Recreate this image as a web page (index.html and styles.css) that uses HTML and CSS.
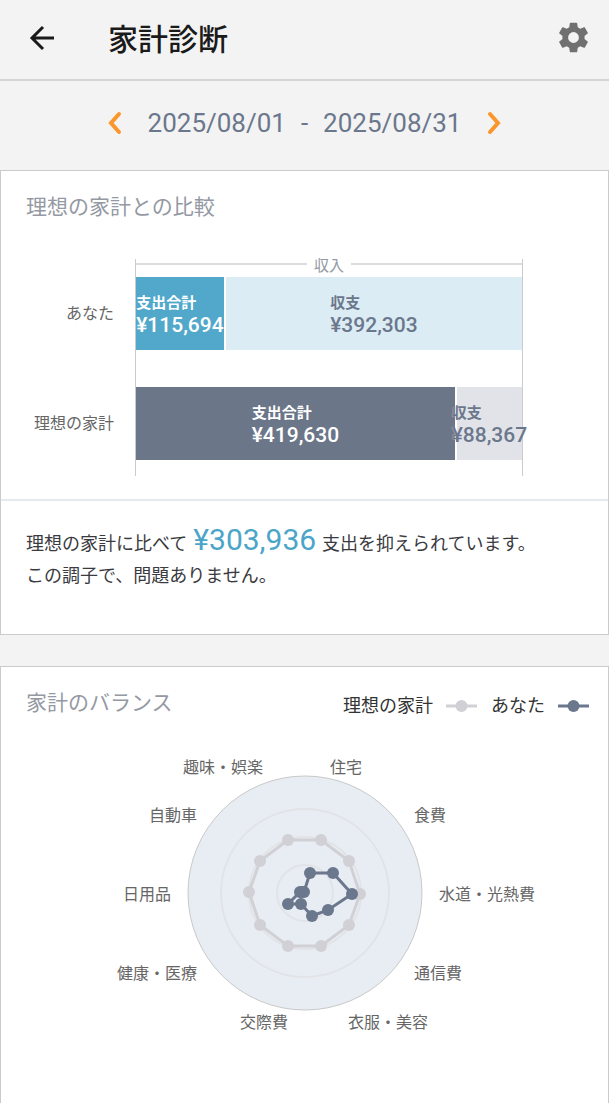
FILE: index.html
```html
<!DOCTYPE html>
<html lang="ja">

<head>
    <meta charset="UTF-8">
    <meta name="viewport" content="width=device-width, initial-scale=1.0">
    <title>家計診断</title>
    <link rel="stylesheet" href="styles.css">
</head>

<body>
    <div class="app">
        <header class="app-bar">
            <button class="icon-button" type="button" aria-label="戻る">
                <svg width="28" height="28" viewBox="0 0 28 28">
                    <path class="back-arrow" d="M26 14H4M15 3L4 14L15 25" />
                </svg>
            </button>
            <h1>家計診断</h1>
            <button class="icon-button" type="button" aria-label="設定">
                <svg width="37" height="37" viewBox="0 0 24 24">
                    <path class="gear" fill-rule="evenodd" d="M19.14,12.94c0.04-0.3,0.06-0.61,0.06-0.94c0-0.32-0.02-0.64-0.07-0.94l2.03-1.58c0.18-0.14,0.23-0.41,0.12-0.61l-1.92-3.32c-0.12-0.22-0.37-0.29-0.59-0.22l-2.39,0.96c-0.5-0.38-1.03-0.7-1.62-0.94L14.4,2.81c-0.04-0.24-0.24-0.41-0.48-0.41h-3.84c-0.24,0-0.43,0.17-0.47,0.41L9.25,5.35C8.66,5.59,8.12,5.92,7.63,6.29L5.24,5.33c-0.22-0.08-0.47,0-0.59,0.22L2.74,8.87C2.62,9.08,2.66,9.34,2.86,9.48l2.03,1.58C4.84,11.36,4.8,11.69,4.8,12s0.02,0.64,0.07,0.94l-2.03,1.58c-0.18,0.14-0.23,0.41-0.12,0.61l1.92,3.32c0.12,0.22,0.37,0.29,0.59,0.22l2.39-0.96c0.5,0.38,1.03,0.7,1.62,0.94l0.36,2.54c0.05,0.24,0.24,0.41,0.48,0.41h3.84c0.24,0,0.44-0.17,0.47-0.41l0.36-2.54c0.59-0.24,1.13-0.56,1.62-0.94l2.39,0.96c0.22,0.08,0.47,0,0.59-0.22l1.92-3.32c0.12-0.22,0.07-0.47-0.12-0.61L19.14,12.94zM12,15.5a3.5,3.5 0 1 1 0,-7a3.5,3.5 0 1 1 0,7z" />
                </svg>
            </button>
        </header>

        <nav class="period">
            <button class="icon-button" type="button" aria-label="前の期間">
                <svg width="16" height="24" viewBox="0 0 16 24">
                    <path class="chevron" d="M13 3L5 12L13 21" />
                </svg>
            </button>
            <div class="period-range">
                <span>2025/08/01</span>
                <span>-</span>
                <span>2025/08/31</span>
            </div>
            <button class="icon-button" type="button" aria-label="次の期間">
                <svg width="16" height="24" viewBox="0 0 16 24">
                    <path class="chevron" d="M3 3L11 12L3 21" />
                </svg>
            </button>
        </nav>

        <main>
            <section class="card">
                <h2>理想の家計との比較</h2>

                <div class="comparison">
                    <div class="bar-labels">
                        <div class="bar-label">あなた</div>
                        <div class="bar-label">理想の家計</div>
                    </div>
                    <div class="plot">
                        <div class="income">収入</div>
                        <div class="bar">
                            <div class="segment you-spent" style="width: 22.77%">
                                <div class="segment-text">支出合計<span class="amount">¥115,694</span></div>
                            </div>
                            <div class="segment you-left" style="width: 77.23%">
                                <div class="segment-text">収支<span class="amount">¥392,303</span></div>
                            </div>
                        </div>
                        <div class="bar">
                            <div class="segment ideal-spent" style="width: 82.6%">
                                <div class="segment-text">支出合計<span class="amount">¥419,630</span></div>
                            </div>
                            <div class="segment ideal-left" style="width: 17.4%">
                                <div class="segment-text">収支<span class="amount">¥88,367</span></div>
                            </div>
                        </div>
                    </div>
                </div>

                <p class="message">理想の家計に比べて<strong>¥303,936</strong>支出を抑えられています。<br>この調子で、問題ありません。</p>
            </section>

            <section class="card balance">
                <div class="card-head">
                    <h2>家計のバランス</h2>
                    <ul class="legend">
                        <li>理想の家計
                            <svg class="ideal" width="31" height="14" viewBox="0 0 31 14">
                                <path d="M0 7H31" />
                                <circle cx="15.5" cy="7" r="6" />
                            </svg>
                        </li>
                        <li>あなた
                            <svg class="you" width="31" height="14" viewBox="0 0 31 14">
                                <path d="M0 7H31" />
                                <circle cx="15.5" cy="7" r="6" />
                            </svg>
                        </li>
                    </ul>
                </div>

                <svg class="radar" viewBox="-240 -143 480 290" role="img" aria-label="家計のバランス">
                    <circle class="radar-area" r="117" />
                    <circle class="radar-ring" r="84" />
                    <circle class="radar-ring" r="56" />
                    <circle class="radar-ring" r="28" />

                    <g class="ideal">
                        <polygon points="-17,-53 16,-53 44,-32 55,1 44,32 16,53 -17,53 -45,32 -56,-1 -45,-32" />
                        <circle cx="-17" cy="-53" r="6" />
                        <circle cx="16" cy="-53" r="6" />
                        <circle cx="44" cy="-32" r="6" />
                        <circle cx="55" cy="1" r="6" />
                        <circle cx="44" cy="32" r="6" />
                        <circle cx="16" cy="53" r="6" />
                        <circle cx="-17" cy="53" r="6" />
                        <circle cx="-45" cy="32" r="6" />
                        <circle cx="-56" cy="-1" r="6" />
                        <circle cx="-45" cy="-32" r="6" />
                    </g>

                    <g class="you">
                        <polygon points="5,-20 28,-20 47,1 23,17 7,23 -4,11 -17,11 -5,-1 -3,-1 -1,-1" />
                        <circle cx="5" cy="-20" r="6" />
                        <circle cx="28" cy="-20" r="6" />
                        <circle cx="47" cy="1" r="6" />
                        <circle cx="23" cy="17" r="6" />
                        <circle cx="7" cy="23" r="6" />
                        <circle cx="-4" cy="11" r="6" />
                        <circle cx="-17" cy="11" r="6" />
                        <circle cx="-5" cy="-1" r="6" />
                        <circle cx="-3" cy="-1" r="6" />
                        <circle cx="-1" cy="-1" r="6" />
                    </g>

                    <g class="radar-labels">
                        <text x="41" y="-120">住宅</text>
                        <text class="right" x="109" y="-72">食費</text>
                        <text class="right" x="134" y="7">水道・光熱費</text>
                        <text class="right" x="109" y="86">通信費</text>
                        <text x="83" y="135">衣服・美容</text>
                        <text x="-41" y="135">交際費</text>
                        <text class="left" x="-108" y="86">健康・医療</text>
                        <text class="left" x="-134" y="7">日用品</text>
                        <text class="left" x="-108" y="-72">自動車</text>
                        <text x="-82" y="-120">趣味・娯楽</text>
                    </g>
                </svg>
            </section>
        </main>
    </div>
</body>

</html>
```
FILE: styles.css
```css
* {
    box-sizing: border-box;
}

body {
    margin: 0;
    background-color: #fff;
    color: #333;
    font-family: Roboto, "Noto Sans CJK JP", sans-serif;
}

.app {
    display: flex;
    flex-direction: column;
    min-height: 100vh;
    margin-right: 6px;
    background-color: #f3f3f3;
}

.icon-button {
    display: flex;
    padding: 0;
    border: none;
    background: none;
    cursor: pointer;
}

/* header */
.app-bar {
    display: flex;
    align-items: center;
    height: 81px;
    padding: 0 17px 4px 28px;
    border-bottom: 2px solid #d4d4d4;
}

.app-bar h1 {
    flex: 1;
    margin: 0 0 0 52px;
    padding-top: 4px;
    color: #1a1a1a;
    font-size: 30px;
    font-weight: 500;
    line-height: 44px;
}

.back-arrow {
    fill: none;
    stroke: #1a1a1a;
    stroke-width: 3;
}

.gear {
    fill: #707070;
}

/* period */
.period {
    display: flex;
    justify-content: center;
    align-items: center;
    gap: 26px;
    height: 89px;
    padding-bottom: 5px;
}

.period-range {
    display: flex;
    gap: 15px;
    color: #6b778c;
    font-size: 26px;
    line-height: 32px;
}

.chevron {
    fill: none;
    stroke: #fb962b;
    stroke-linecap: round;
    stroke-width: 4;
}

/* cards */
main {
    display: flex;
    flex-direction: column;
    flex: 1;
    gap: 31px;
}

.card {
    border: 1px solid #cbcbcf;
    background-color: #fff;
}

.card h2 {
    margin: 0;
    padding: 20px 25px 0;
    color: #9499a3;
    font-size: 21px;
    font-weight: 400;
    line-height: 32px;
}

/* bar chart */
.comparison {
    display: flex;
    gap: 21px;
    padding: 36px 85px 23px 0;
    border-bottom: 2px solid #e6eaee;
}

.bar-labels {
    display: flex;
    flex-direction: column;
    gap: 37px;
    width: 113px;
    padding-top: 18px;
    color: #666;
    font-size: 16px;
    line-height: 73px;
    text-align: right;
}

.plot {
    display: flex;
    flex: 1;
    flex-direction: column;
    gap: 37px;
    min-width: 0;
    padding-bottom: 16px;
    border: solid #cbcbcf;
    border-width: 0 1px;
}

.income {
    display: flex;
    align-items: center;
    gap: 7px;
    height: 12px;
    margin-bottom: -31px;
    padding-bottom: 2px;
    color: #9499a3;
    font-size: 15px;
}

.income::before,
.income::after {
    content: "";
    flex: 1;
    height: 2px;
    background-color: #dcdcde;
}

.bar {
    display: flex;
    height: 73px;
}

.segment {
    display: flex;
    justify-content: center;
    align-items: center;
    min-width: 0;
}

.segment + .segment {
    border-left: 2px solid #fff;
}

.segment-text {
    font-size: 15px;
    font-weight: 700;
    line-height: 22px;
    white-space: nowrap;
}

.amount {
    display: block;
    font-size: 21px;
    font-weight: 500;
}

.you-spent {
    background-color: #51a8ca;
    color: #fff;
}

.you-left {
    background-color: #dcecf4;
    color: #6b778c;
}

.ideal-spent {
    background-color: #6b7689;
    color: #fff;
}

.ideal-left {
    background-color: #e2e3e8;
    color: #6b778c;
    text-shadow: 0 0 1px #e2e3e8;
}

.message {
    margin: 0;
    padding: 23px 25px 42px;
    color: #3a3a40;
    font-size: 18px;
    line-height: 32px;
}

.message strong {
    margin: 0 6px;
    color: #4ba5c8;
    font-size: 30px;
    font-weight: 400;
}

/* balance */
.balance {
    flex: 1;
    border-bottom: none;
}

.card-head {
    display: flex;
    justify-content: space-between;
}

.legend {
    display: flex;
    gap: 14px;
    margin: 0;
    padding: 23px 19px 0 0;
    list-style: none;
    font-size: 18px;
    line-height: 32px;
}

.legend li {
    display: flex;
    align-items: center;
    gap: 13px;
}

.ideal {
    fill: #d0d0d5;
    stroke: #d0d0d5;
}

.you {
    fill: #6b778c;
    stroke: #6b778c;
}

.ideal path,
.you path {
    stroke-width: 3;
}

.ideal polygon,
.you polygon {
    fill: none;
    stroke-width: 3;
}

.ideal circle,
.you circle {
    stroke: none;
}

.radar {
    display: block;
    width: 100%;
    max-width: 480px;
    margin: 28px auto 0;
}

.radar-area {
    fill: #e8edf4;
    stroke: #c8c8c8;
    stroke-width: 1;
}

.radar-ring {
    fill: none;
    stroke: #e2e3e6;
    stroke-width: 2;
}

.radar-labels {
    fill: #666;
    font-size: 16px;
    text-anchor: middle;
}

.radar-labels .right {
    text-anchor: start;
}

.radar-labels .left {
    text-anchor: end;
}
```
